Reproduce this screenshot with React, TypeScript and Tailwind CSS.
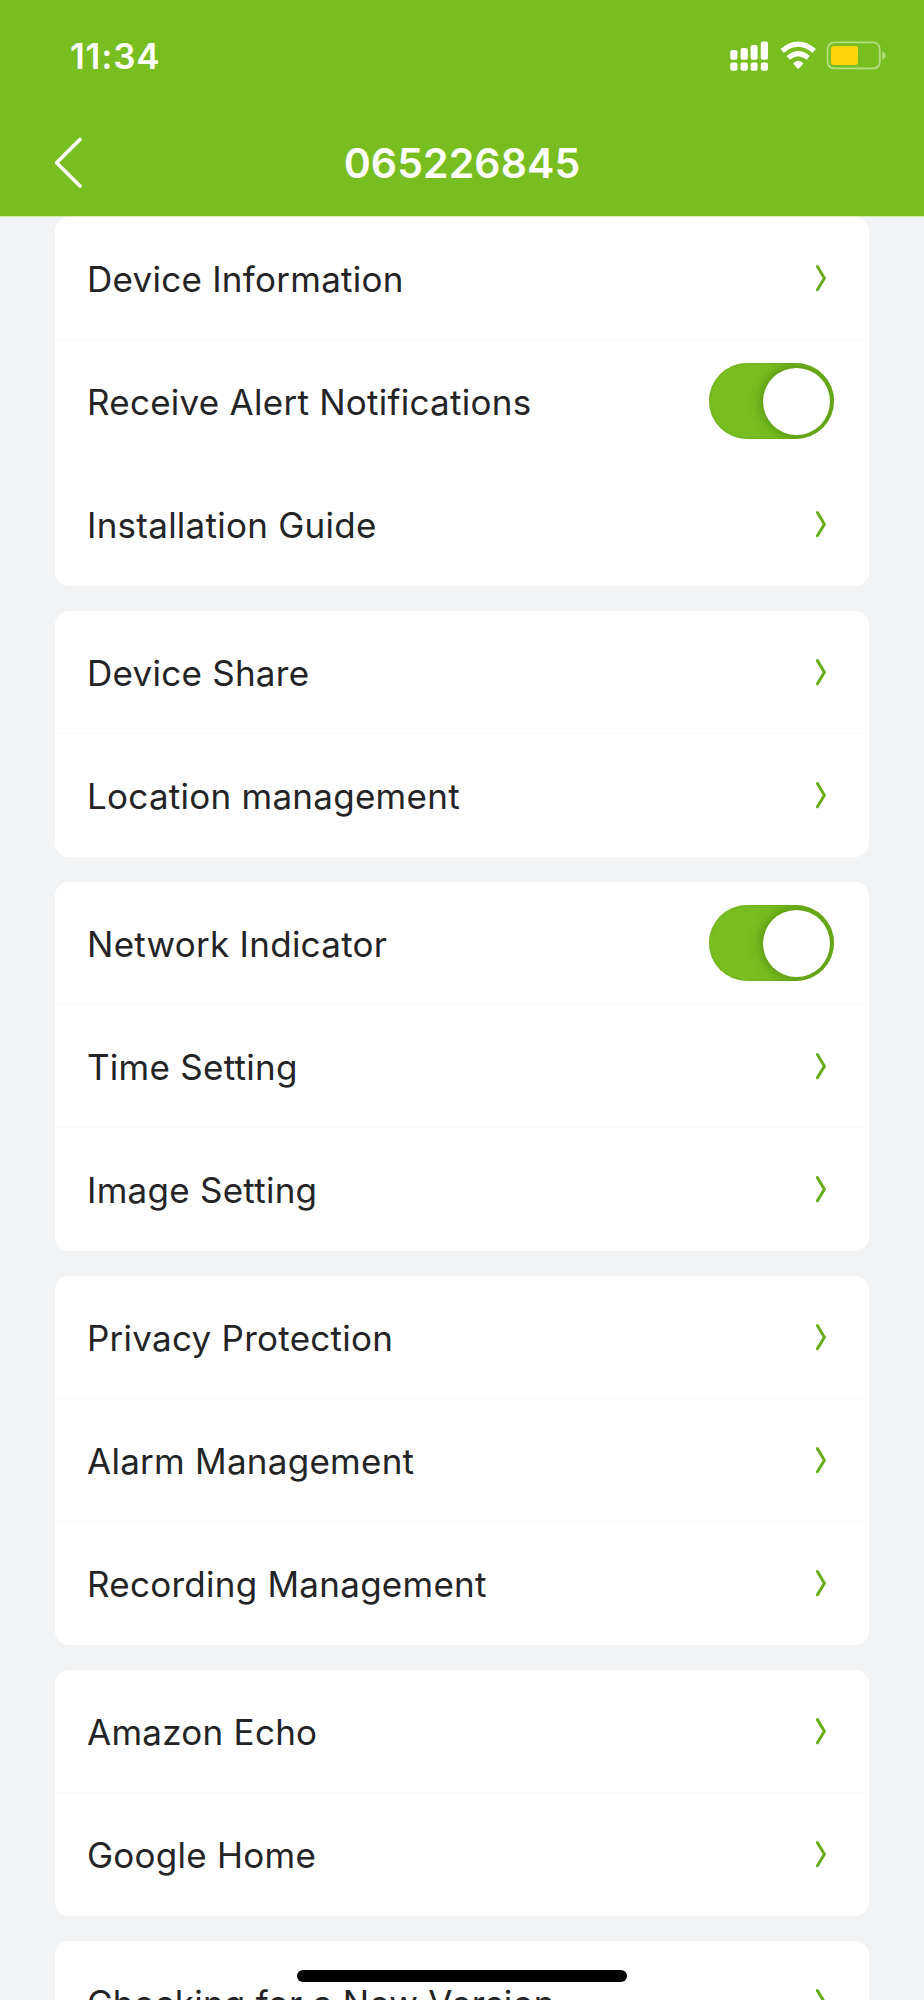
import React from 'react';
import { clsx } from 'clsx';

type Item = {
  label: string;
  toggle?: boolean;
  divider?: boolean;
};

const groups: Item[][] = [
  [
    { label: 'Device Information', divider: true },
    { label: 'Receive Alert Notifications', toggle: true },
    { label: 'Installation Guide' },
  ],
  [{ label: 'Device Share', divider: true }, { label: 'Location management' }],
  [
    { label: 'Network Indicator', toggle: true, divider: true },
    { label: 'Time Setting', divider: true },
    { label: 'Image Setting' },
  ],
  [
    { label: 'Privacy Protection', divider: true },
    { label: 'Alarm Management', divider: true },
    { label: 'Recording Management' },
  ],
  [{ label: 'Amazon Echo', divider: true }, { label: 'Google Home' }],
  [{ label: 'Checking for a New Version' }],
];

const StatusIcons: React.FC = () => (
  <svg width="160" height="32" viewBox="728 40 160 32" fill="none">
    {/* Signal */}
    <g fill="white">
      <rect x="730.3" y="50" width="7.2" height="9.8" rx="2" />
      <rect x="740.6" y="48" width="7.2" height="11.8" rx="2" />
      <rect x="750.6" y="45" width="7" height="14.8" rx="2" />
      <rect x="760.8" y="41.5" width="7.2" height="18.3" rx="2" />
      <rect x="730.3" y="62.4" width="7.2" height="8.4" rx="2" />
      <rect x="740.6" y="62.4" width="7.2" height="8.4" rx="2" />
      <rect x="750.6" y="62.4" width="7" height="8.4" rx="2" />
      <rect x="760.8" y="62.4" width="7.2" height="8.4" rx="2" />
    </g>
    {/* Wifi */}
    <path d="M782.2 51 Q798.2 37.4 814.2 51" stroke="white" strokeWidth="5" />
    <path d="M788.2 57.8 Q798.2 49.4 808.2 57.8" stroke="white" strokeWidth="5" />
    <path d="M793 63.4 Q798.2 58.6 803.4 63.4 L798.9 68.4 Q798.2 69 797.5 68.4 Z" fill="white" />
    {/* Battery */}
    <rect x="827.6" y="42.4" width="52.2" height="26" rx="6.5" stroke="#b5de80" strokeWidth="1.8" />
    <rect x="831" y="46" width="27" height="19" rx="3" fill="#ffd60a" />
    <path d="M882.3 51.2 Q885.6 52.6 885.6 55.6 Q885.6 58.6 882.3 60 Z" fill="#b5de80" />
  </svg>
);

const Toggle: React.FC = () => (
  <div className="mr-[35px] flex h-[76px] w-[125px] items-center justify-end overflow-hidden rounded-full bg-[#78be20] pr-1 shadow-[inset_0_0_2px_#5a9a12]">
    <div className="size-[67px] rounded-full bg-white shadow-[0_0_12px_2px_rgba(50,100,0,0.5)]" />
  </div>
);

const Chevron: React.FC = () => (
  <svg className="mr-[42px]" width="12" height="28" viewBox="0 0 12 28" fill="none">
    <path d="M2.4 2.6 L9.4 14.2 L2.4 25.8" stroke="#67ad1b" strokeWidth="3" strokeLinecap="round" />
  </svg>
);

const Row: React.FC<{ item: Item }> = ({ item }) => (
  <div
    className={clsx(
      'flex h-[123px] items-center justify-between border-b pl-8',
      item.divider ? 'border-[#fafafa]' : 'border-transparent'
    )}
  >
    <span className="pt-0.5 text-[35px] leading-none tracking-[0.26px] whitespace-nowrap text-[#242426]">
      {item.label}
    </span>
    {item.toggle ? <Toggle /> : <Chevron />}
  </div>
);

export default function App() {
  return (
    <div className="relative flex h-[2000px] w-[924px] flex-col overflow-hidden bg-[#f2f3f5] font-['Inter',sans-serif]">
      <header className="h-[217px] shrink-0 border-b border-[#d5edb0] bg-[#78be20] text-white">
        <div className="flex h-28 items-center justify-between pr-9 pl-[70px]">
          <span className="text-[35px] leading-none font-semibold tracking-[0.8px]">11:34</span>
          <StatusIcons />
        </div>
        <div className="flex h-[101px] items-center justify-between px-[53px]">
          <svg width="30" height="52" viewBox="0 0 30 52" fill="none">
            <path
              d="M27 2.5 L3.6 25.8 L27 49"
              stroke="white"
              strokeWidth="3.6"
              strokeLinecap="round"
              strokeLinejoin="round"
            />
          </svg>
          <h1 className="pt-px text-[41px] leading-none font-semibold tracking-[0.1px]">065226845</h1>
          <div className="w-[30px]" />
        </div>
      </header>

      <main className="flex flex-col gap-[25px] px-[55px]">
        {groups.map((items, i) => (
          <section key={i} className="rounded-[14px] bg-white">
            {items.map((item) => (
              <Row key={item.label} item={item} />
            ))}
          </section>
        ))}
      </main>

      {/* Home indicator */}
      <div className="absolute top-[1970px] left-[297px] h-3 w-[330px] rounded-full bg-black" />
    </div>
  );
}
